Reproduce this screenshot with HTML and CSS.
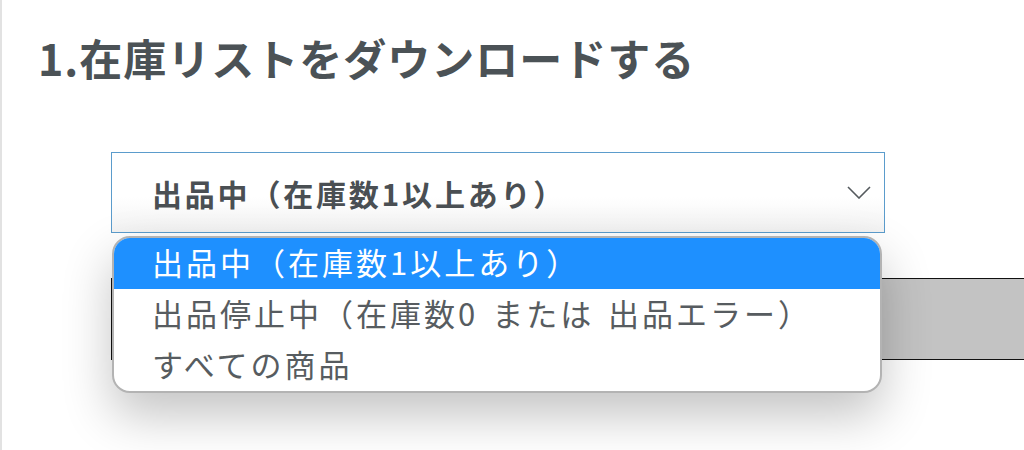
FILE: index.html
```html
<!DOCTYPE html>
<html lang="ja">
<head>
    <meta charset="UTF-8">
    <meta name="viewport" content="width=device-width, initial-scale=1.0">
    <title>在庫リストをダウンロードする</title>
    <link rel="stylesheet" href="styles.css">
</head>
<body>

<div class="page">
    <h2 class="step-title">1.在庫リストをダウンロードする</h2>

    <form class="download-form" id="downloadForm">
        <div class="select-wrap">
            <div class="select-box">
                <span>出品中（在庫数1以上あり）</span>
                <svg class="chevron" width="24" height="13" viewBox="0 0 24 13">
                    <polyline points="1,1 12,12 23,1" fill="none" stroke="#555a5e" stroke-width="1.6"/>
                </svg>
            </div>
            <ul class="select-options">
                <li class="selected">出品中（在庫数1以上あり）</li>
                <li>出品停止中（在庫数0 または 出品エラー）</li>
                <li>すべての商品</li>
            </ul>
        </div>
        <button type="submit" class="download-btn"></button>
    </form>
</div>

</body>
</html>
```

FILE: styles.css
```css
body {
    margin: 0;
    background: #fff;
    font-family: "Noto Sans CJK JP", "Noto Sans", sans-serif;
    overflow: hidden;
    height: 450px;
}

.page {
    border-left: 2px solid #e2e2e2;
    height: 450px;
    padding: 0 0 0 36px;
}

.step-title {
    margin: 0;
    padding-top: 25px;
    font-size: 43px;
    line-height: 64px;
    font-weight: bold;
    letter-spacing: 1px;
    color: #4b5256;
}

.download-form {
    margin: 63px 0 0 73px;
}

.select-wrap {
    position: relative;
    width: 774px;
}

.select-box {
    display: flex;
    align-items: center;
    justify-content: space-between;
    height: 79px;
    padding: 0 13px 0 40px;
    border: 1px solid #5b9ccc;
    background: linear-gradient(#fff 55%, #f3f3f3);
    font-size: 30px;
    font-weight: bold;
    letter-spacing: 2.8px;
    color: #4a4f53;
}

.select-options {
    position: absolute;
    top: 84px;
    left: 1px;
    width: 766px;
    margin: 0;
    padding: 0;
    list-style: none;
    background: #fff;
    border: 2px solid #b3b3b3;
    border-radius: 18px;
    overflow: hidden;
    box-shadow: 0 22px 50px rgba(0, 0, 0, 0.24);
    z-index: 10;
}

.select-options li {
    height: 51px;
    line-height: 48px;
    padding-left: 38px;
    font-size: 31px;
    letter-spacing: 3px;
    word-spacing: 4px;
    color: #575c60;
}

.select-options li.selected {
    background-color: #1e90ff;
    color: #fff;
}

.download-btn {
    display: block;
    width: 960px;
    height: 82px;
    margin-top: 45px;
    border: 1px solid #111;
    background: #c3c3c3;
    cursor: pointer;
}
```
